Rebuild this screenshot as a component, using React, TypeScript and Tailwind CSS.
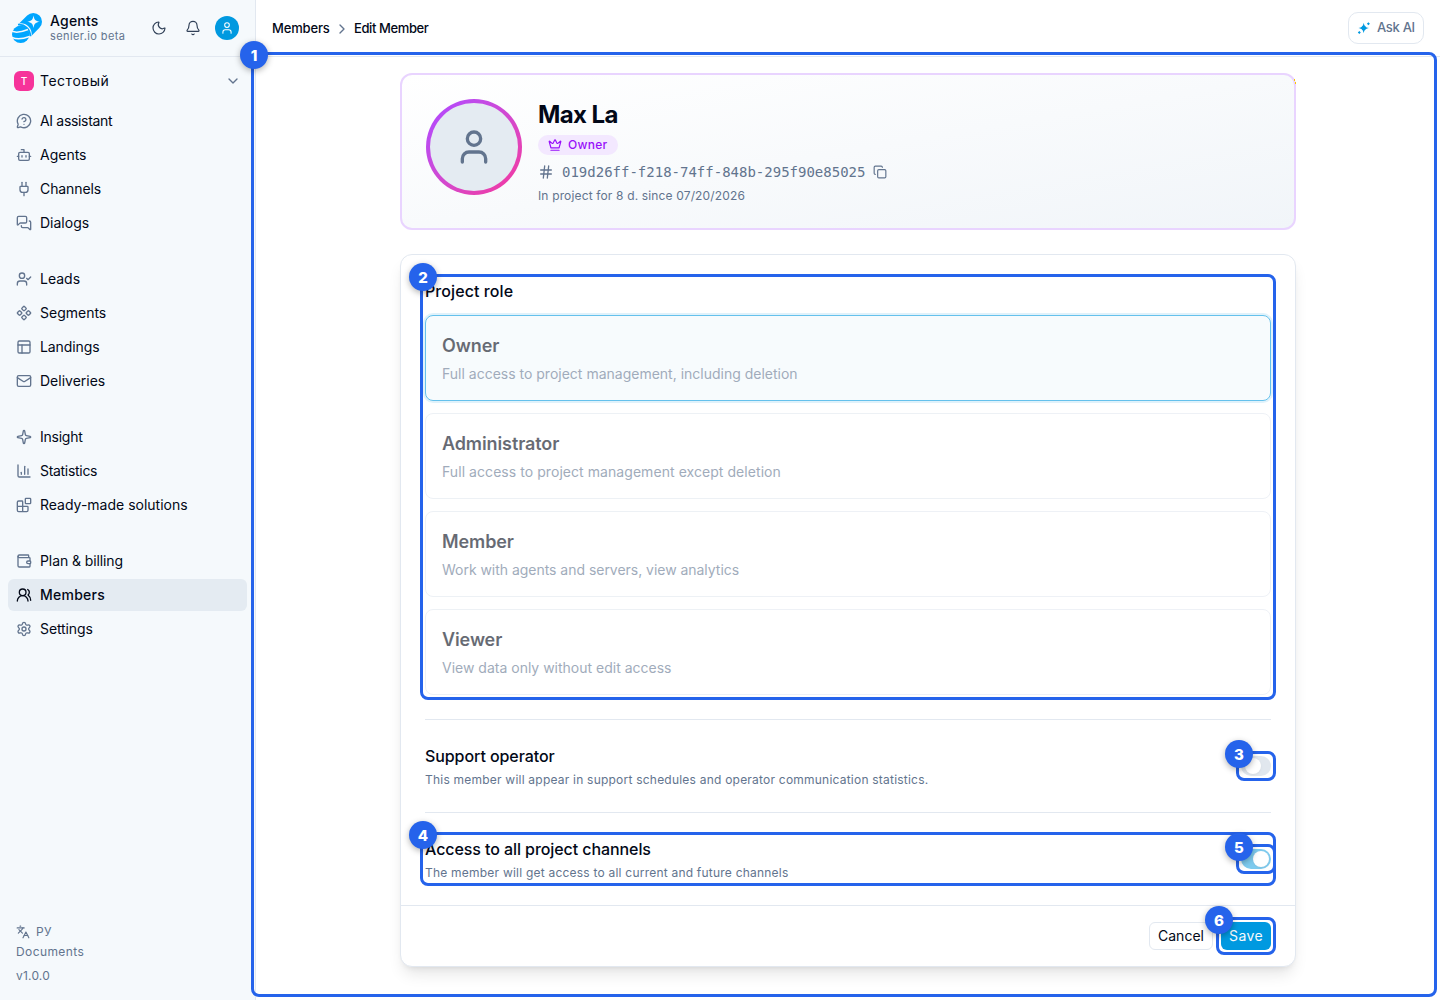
import React, { ReactNode } from 'react';
import {
  Bell,
  Blocks,
  Bot,
  ChartColumn,
  ChevronDown,
  ChevronRight,
  Component,
  Copy,
  Crown,
  Hash,
  Languages,
  LucideIcon,
  Mail,
  MessageCircleQuestionMark,
  MessagesSquare,
  Moon,
  PanelsTopLeft,
  Plug,
  Settings,
  Sparkle,
  User,
  UserCheck,
  UsersRound,
  Wallet,
} from 'lucide-react';
import clsx from 'clsx';

// ===========================================
// Data
// ===========================================

interface NavItem {
  label: string;
  icon: LucideIcon;
  active?: boolean;
  className?: string;
}

const NAV_GROUPS: NavItem[][] = [
  [
    { label: 'AI assistant', icon: MessageCircleQuestionMark, className: 'tracking-[-0.33px]' },
    { label: 'Agents', icon: Bot },
    { label: 'Channels', icon: Plug, className: 'tracking-[-0.1px]' },
    { label: 'Dialogs', icon: MessagesSquare },
  ],
  [
    { label: 'Leads', icon: UserCheck },
    { label: 'Segments', icon: Component },
    { label: 'Landings', icon: PanelsTopLeft, className: 'tracking-[-0.1px]' },
    { label: 'Deliveries', icon: Mail },
  ],
  [
    { label: 'Insight', icon: Sparkle, className: 'tracking-[-0.25px]' },
    { label: 'Statistics', icon: ChartColumn, className: 'tracking-[-0.3px]' },
    { label: 'Ready-made solutions', icon: Blocks },
  ],
  [
    { label: 'Plan & billing', icon: Wallet, className: 'tracking-[-0.1px]' },
    { label: 'Members', icon: UsersRound, active: true, className: 'tracking-[0.25px]' },
    { label: 'Settings', icon: Settings, className: 'tracking-[-0.1px]' },
  ],
];

const ROLES = [
  { title: 'Owner', description: 'Full access to project management, including deletion', selected: true },
  { title: 'Administrator', description: 'Full access to project management except deletion', className: 'tracking-[0.06px]' },
  { title: 'Member', description: 'Work with agents and servers, view analytics', className: 'tracking-[-0.03px]' },
  { title: 'Viewer', description: 'View data only without edit access' },
];

// ===========================================
// Small pieces
// ===========================================

function Logo() {
  return (
    <svg className="size-[30px] shrink-0" viewBox="0 0 30 30" fill="none">
      <path d="M21.300 8.700 11 19" stroke="#00a6ff" strokeWidth="17.400" strokeLinecap="round" />
      <circle cx="8.700" cy="21.300" r="11" fill="#f5f9fc" />
      <path d="M6 11.700c6.500-1 12.500 4.800 12.300 11.600" stroke="#00a6ff" strokeWidth="1.800" />
      <path d="M21.500 2.500c.8 4.400 1.800 5.400 6.200 6.200-4.400.8-5.400 1.800-6.200 6.200-.8-4.400-1.800-5.400-6.200-6.200 4.400-.8 5.400-1.800 6.200-6.200Z" fill="#f5f9fc" />
      <circle cx="8.700" cy="21.300" r="8.700" fill="#00a6ff" />
      <path d="M0 18.300c4.500 2 8.500 1.200 16-1.800M0 24.300c4 2.200 9.500 2.200 17.500-.8" stroke="#f5f9fc" strokeWidth="1.500" />
    </svg>
  );
}

function AskAiIcon() {
  return (
    <svg className="size-3.5 shrink-0" viewBox="0 0 14 14" fill="#0099e0">
      <path d="M6.700 1.700c.8 3.600 1.700 4.500 5.300 5.300-3.600.8-4.500 1.700-5.300 5.300C5.900 8.700 5 7.800 1.400 7 5 6.200 5.900 5.300 6.700 1.700Z" />
      <path d="m11.400 1.200 1.500 1.500-1.500 1.500-1.500-1.500ZM2.300 9.900l1.500 1.500-1.500 1.500-1.500-1.500Z" />
      <circle cx="6.700" cy="7" r="2.200" />
    </svg>
  );
}

/**
 * Numbered highlight: a blue frame with a round marker on its corner
 */
function Callout({ number, className }: { number: number; className: string }) {
  return (
    <div className={clsx('pointer-events-none absolute z-20 rounded-lg border-3 border-[#2563eb]', className)}>
      <div className="absolute -top-3.5 -left-3.5 flex size-7 items-center justify-center rounded-full bg-[#2563eb] pt-px text-[15px] leading-none font-extrabold text-white shadow-[0_2px_6px_rgba(0,0,0,0.3)]">
        {number}
      </div>
    </div>
  );
}

function Switch({ checked = false }: { checked?: boolean }) {
  return (
    <div className={clsx('flex h-5 w-[30px] items-center rounded-full opacity-50', checked ? 'justify-end bg-[#0099e0] pr-0.5' : 'bg-[#c5d1df] pl-1')}>
      <div className="size-4 rounded-full bg-white shadow-sm" />
    </div>
  );
}

interface ToggleRowProps {
  title: string;
  description: string;
  checked?: boolean;
  children?: ReactNode;
  callout: number;
}

function ToggleRow({ title, description, checked, children, callout }: ToggleRowProps) {
  return (
    <div className="relative flex items-center justify-between">
      <div>
        <h3 className="text-base font-medium tracking-[-0.08px]">{title}</h3>
        <p className="mt-1 text-xs tracking-[0.22px] text-slate-500">{description}</p>
      </div>
      {children}
      <div className="relative">
        <Switch checked={checked} />
        <Callout number={callout} className="-inset-[5px]" />
      </div>
    </div>
  );
}

// ===========================================
// Sidebar
// ===========================================

function Sidebar() {
  return (
    <aside className="flex w-64 shrink-0 flex-col border-r border-slate-200 bg-[#f5f9fc]">
      <div className="flex h-[57px] items-center border-b border-slate-200 pr-4 pl-3">
        <Logo />
        <div className="ml-2">
          <div className="text-sm leading-4 font-medium tracking-[0.2px]">Agents</div>
          <div className="text-[11px] leading-[14px] tracking-[0.4px] text-slate-500">senler.io beta</div>
        </div>
        <div className="ml-auto flex items-center gap-[18px] text-slate-700">
          <Moon className="size-4" strokeWidth={1.75} />
          <Bell className="size-4" strokeWidth={1.75} />
          <div className="-ml-1 flex size-6 items-center justify-center rounded-full bg-[#0099e0] text-white">
            <User className="size-3.5" strokeWidth={1.75} />
          </div>
        </div>
      </div>

      {/* Project switcher */}
      <div className="mx-2 mt-2 flex h-8 items-center gap-1.5 px-1.5">
        <div className="flex size-5 items-center justify-center rounded-md bg-pink-500 text-[10px] font-medium text-white">Т</div>
        <span className="text-sm tracking-[0.5px]">Тестовый</span>
        <ChevronDown className="ml-auto size-4 text-slate-500" />
      </div>

      <nav className="mt-2 flex flex-col gap-6 px-2">
        {NAV_GROUPS.map((group, i) => (
          <div key={i} className="flex flex-col gap-0.5">
            {group.map(({ label, icon: Icon, active, className }) => (
              <div
                key={label}
                className={clsx('flex h-8 items-center gap-2 rounded-md px-2 text-sm', active && 'bg-[#e4ebf2] font-medium', className)}
              >
                <Icon className={clsx('size-4', !active && 'text-slate-500')} />
                {label}
              </div>
            ))}
          </div>
        ))}
      </nav>

      <div className="mt-auto px-4 pb-3.5 text-xs tracking-[0.4px] text-slate-500">
        <div className="flex h-5 items-center gap-1.5">
          <Languages className="size-3.5" />
          РУ
        </div>
        <div className="flex h-5 items-center">Documents</div>
        <div className="mt-1 flex h-5 items-center tracking-[0.2px]">v1.0.0</div>
      </div>
    </aside>
  );
}

// ===========================================
// Main content
// ===========================================

function ProfileCard() {
  return (
    <section className="relative flex gap-4 rounded-xl border-2 border-purple-200 bg-linear-to-br from-white to-[#f1f5f9] p-6">
      {/* Yellow glints on the corner */}
      <span className="absolute top-1 -right-px h-0.5 w-px bg-yellow-400" />
      <span className="absolute top-[7px] -right-0.5 h-0.5 w-px bg-yellow-400" />
      <div className="size-24 rounded-full bg-linear-to-br from-purple-500 to-pink-500 p-1">
        <div className="flex size-full items-center justify-center rounded-full bg-[#e4ebf2] text-slate-500">
          <User className="size-10" />
        </div>
      </div>
      <div className="flex flex-col items-start">
        <h1 className="text-2xl leading-8 font-bold tracking-[-0.6px]">Max La</h1>
        <span className="mt-1 flex h-5 w-20 items-center gap-1.5 rounded-full bg-purple-100 px-2.5 text-xs font-medium tracking-[0.3px] text-purple-600">
          <Crown className="size-3.5" />
          Owner
        </span>
        <div className="mt-2 flex h-[17px] items-center gap-2 text-slate-500">
          <Hash className="size-4" />
          <span className="font-['DejaVu_Sans_Mono',monospace] text-sm">019d26ff-f218-74ff-848b-295f90e85025</span>
          <Copy className="size-3.5" />
        </div>
        <p className="mt-2 text-xs tracking-[0.15px] text-slate-500">In project for 8 d. since 07/20/2026</p>
      </div>
    </section>
  );
}

function RoleList() {
  return (
    <div className="relative">
      <h3 className="text-base font-medium tracking-[0.08px]">Project role</h3>
      <div className="mt-3 flex flex-col gap-3">
        {ROLES.map((role) => (
          <div
            key={role.title}
            className={clsx(
              'rounded-lg border p-4 opacity-60',
              role.selected ? 'border-[#0099e0] bg-[#f2f9fd] ring-2 ring-[#0099e0]/20' : 'border-slate-200',
            )}
          >
            <div className="text-lg leading-7 font-semibold tracking-[-0.1px]">{role.title}</div>
            <p className={clsx('mt-1 text-sm text-slate-500', role.className)}>{role.description}</p>
          </div>
        ))}
      </div>
      <Callout number={2} className="-inset-[5px]" />
    </div>
  );
}

function MemberForm() {
  return (
    <section className="mt-6 rounded-xl border border-slate-200 bg-white shadow-lg">
      <div className="p-6">
        <RoleList />
        <hr className="my-6 border-slate-200" />
        <ToggleRow
          title="Support operator"
          description="This member will appear in support schedules and operator communication statistics."
          callout={3}
        />
        <hr className="my-6 border-slate-200" />
        <ToggleRow
          title="Access to all project channels"
          description="The member will get access to all current and future channels"
          checked
          callout={5}
        >
          <Callout number={4} className="-inset-[5px]" />
        </ToggleRow>
      </div>
      <div className="flex justify-end gap-2 border-t border-slate-200 px-6 py-4">
        <button className="h-7 w-16 rounded-md border border-slate-200 text-sm">Cancel</button>
        <div className="relative">
          <button className="h-7 w-[50px] rounded-md bg-[#0099e0] text-sm tracking-[0.4px] text-slate-50">Save</button>
          <Callout number={6} className="-inset-[5px]" />
        </div>
      </div>
    </section>
  );
}

export default function App() {
  return (
    <div className="relative flex h-[1000px] w-[1440px] overflow-hidden bg-white font-[Inter,sans-serif] text-[#020817]">
      <Sidebar />
      <main className="flex-1">
        <header className="flex h-[57px] items-center justify-between border-b border-slate-200 px-4">
          <div className="flex items-center gap-1 pt-px text-[13px] font-medium">
            <span className="w-[58px] tracking-[-0.15px]">Members</span>
            <ChevronRight className="size-4 text-slate-500" />
            <span className="tracking-[-0.4px]">Edit Member</span>
          </div>
          <button className="flex h-8 w-[76px] items-center gap-1.5 rounded-[10px] border border-slate-200 pl-2 text-[13px] font-medium tracking-[-0.3px] whitespace-nowrap text-slate-500">
            <AskAiIcon />
            Ask AI
          </button>
        </header>
        <div className="mx-auto w-4xl pt-4">
          <ProfileCard />
          <MemberForm />
        </div>
      </main>
      <Callout number={1} className="top-[52px] left-[251px] h-[945px] w-[1186px]" />
    </div>
  );
}
